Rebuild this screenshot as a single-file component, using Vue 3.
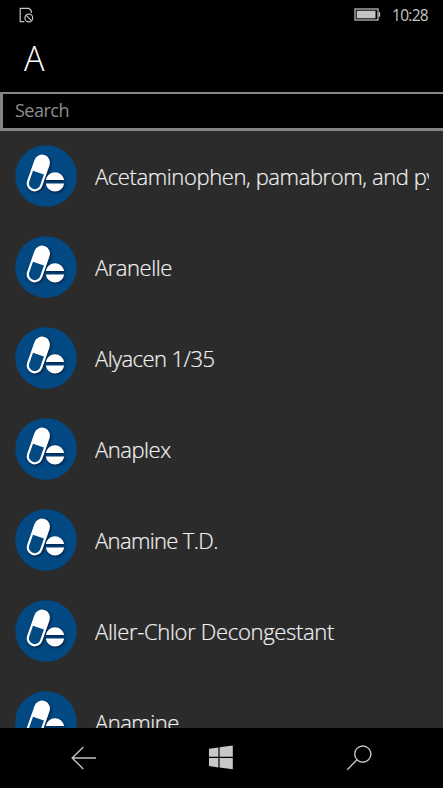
<script setup>
const items = [
  { name: 'Acetaminophen, pamabrom, and pyrilamine', spacing: -0.4 },
  { name: 'Aranelle', spacing: -0.45 },
  { name: 'Alyacen 1/35', spacing: -0.58 },
  { name: 'Anaplex', spacing: -0.48 },
  { name: 'Anamine T.D.', spacing: -0.65 },
  { name: 'Aller-Chlor Decongestant', spacing: -0.32 },
  { name: 'Anamine', spacing: -0.5 },
]
</script>

<template>
  <div class="phone">
    <header class="status">
      <svg class="sim" width="16" height="18" viewBox="0 0 16 18" fill="none" stroke="#c4c4c4" stroke-width="1.2">
        <path d="M5.2 15.6H1.2V2.4H10l2.3 2.4V7" />
        <circle cx="9.8" cy="12" r="3.9" />
        <path d="M7.2 9.4l5.3 5.3" />
      </svg>
      <div class="right">
        <svg width="27" height="14" viewBox="0 0 27 14">
          <rect x="1" y="1" width="23" height="11" fill="none" stroke="#c8c8c8" stroke-width="1.2" />
          <rect x="2.7" y="2.7" width="18.8" height="7.6" fill="#c4c4c4" />
          <rect x="24.6" y="4.3" width="1.5" height="4.4" fill="#c8c8c8" />
        </svg>
        <span class="time">10:28</span>
      </div>
    </header>
    <h1 class="title">A</h1>
    <input class="search" type="text" placeholder="Search" />
    <ul class="list">
      <li v-for="item in items" :key="item.name" class="row">
        <svg class="pill" width="62" height="62" viewBox="0 0 62 62">
          <circle cx="31" cy="31" r="30.8" fill="#034983" />
          <g class="shape">
            <g transform="translate(27 17.6) rotate(19.4)">
              <rect x="-8" y="-8" width="16" height="38" rx="8" fill="#fff" />
              <path d="M-5.8 10.6H5.8V22A5.8 5.8 0 0 1-5.8 22Z" fill="#034983" />
            </g>
            <path d="M30.8 35.1a9.3 9.3 0 0 1 18.4 0ZM30.8 38.5a9.3 9.3 0 0 0 18.4 0Z" fill="#fff" />
          </g>
        </svg>
        <span class="name" :style="{ letterSpacing: item.spacing + 'px' }">{{ item.name }}</span>
      </li>
    </ul>
    <nav class="nav">
      <svg width="26" height="26" viewBox="0 0 26 26" fill="none" stroke="#c4c4c4" stroke-width="1.4">
        <path d="M25 13H1.2M12.3 2L1.2 13l11.1 11" />
      </svg>
      <svg width="26" height="26" viewBox="1 0.5 26 26" fill="#c8c8c8">
        <path d="M1 4.2l9.4-1.3v9.3H1ZM11.6 2.7L24.8.9v11.3H11.6ZM1 13.6h9.4v9.3L1 21.6ZM11.6 13.6h13.2v11.1l-13.2-1.7Z" />
      </svg>
      <svg width="26" height="26" viewBox="0 0 26 26" fill="none" stroke="#c4c4c4" stroke-width="1.4">
        <circle cx="16.8" cy="9.1" r="8.1" />
        <path d="M11 14.8L1.2 24.8" />
      </svg>
    </nav>
  </div>
</template>

<style>
body {
  background: #000;
}
</style>

<style scoped>
.phone {
  display: flex;
  flex-direction: column;
  width: 443px;
  height: 788px;
  overflow: hidden;
  background: #000;
  color: #f0f0f0;
  font-family: "Open Sans", "Noto Sans", sans-serif;
}
.status {
  display: flex;
  justify-content: space-between;
  align-items: center;
  height: 30px;
  padding: 0 14px 0 19px;
}
.right {
  display: flex;
  align-items: center;
  gap: 11px;
}
.time {
  width: 37px;
  color: #c4c4c4;
  font-size: 15.5px;
  line-height: 30px;
  letter-spacing: -0.7px;
  white-space: nowrap;
}
.title {
  height: 62px;
  margin: 0;
  padding-left: 24px;
  font-size: 34px;
  font-weight: 300;
  line-height: 57px;
  color: #fff;
}
.search {
  box-sizing: border-box;
  flex: none;
  width: 446px;
  height: 39px;
  padding: 0 12px 2px;
  border: 3px solid #858585;
  border-top-width: 2px;
  border-radius: 0;
  outline: none;
  background: #000;
  color: #fff;
  font: 18px "Open Sans", "Noto Sans", sans-serif;
  letter-spacing: -0.5px;
}
.search::placeholder {
  color: #8e8e8e;
  opacity: 1;
}
.list {
  flex: 1;
  min-height: 0;
  margin: 0;
  padding: 0;
  overflow: hidden;
  background: #2b2b2b;
  list-style: none;
}
.row {
  display: flex;
  align-items: center;
  box-sizing: border-box;
  height: 91px;
  padding: 0 14px 2px 15px;
}
.pill {
  flex: none;
  margin-right: 18px;
}
.shape {
  filter: drop-shadow(1.5px 1.5px 1.5px rgba(0, 12, 40, 0.75));
}
.name {
  flex: 1;
  min-width: 0;
  overflow: hidden;
  font-size: 22px;
  font-weight: 350;
  -webkit-text-stroke: 0.2px #f0f0f0;
  line-height: 32px;
  white-space: nowrap;
}
.nav {
  display: flex;
  flex: none;
  justify-content: space-between;
  align-items: center;
  height: 60px;
  padding: 0 71px 0 71px;
}
</style>
